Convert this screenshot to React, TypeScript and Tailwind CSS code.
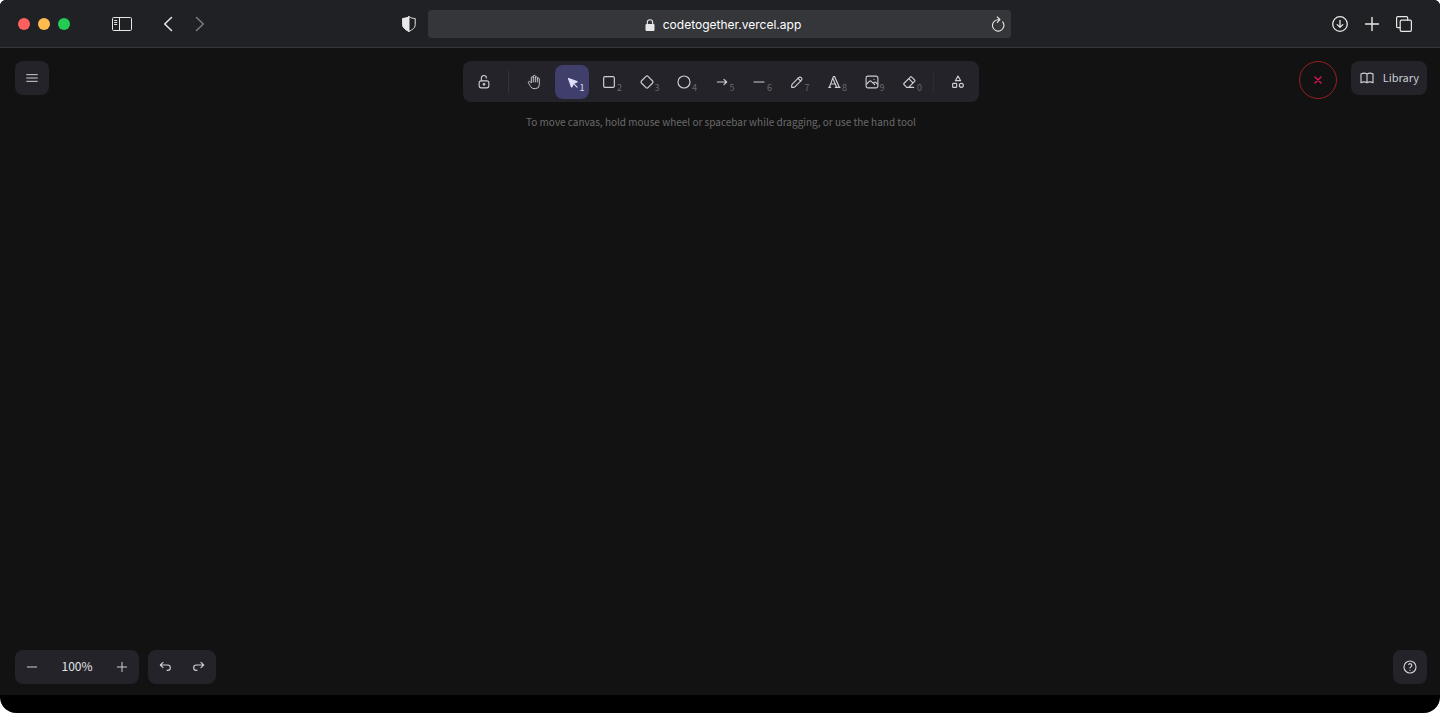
import { useState, type ReactNode } from "react";

type IconProps = { children: ReactNode; box?: number; stroke?: number; className?: string };

function Icon({ children, box = 24, stroke = 1.75, className = "size-4" }: IconProps) {
  return (
    <svg
      viewBox={`0 0 ${box} ${box}`}
      className={className}
      fill="none"
      stroke="currentColor"
      strokeWidth={stroke}
      strokeLinecap="round"
      strokeLinejoin="round"
      aria-hidden="true"
    >
      {children}
    </svg>
  );
}

type Tool = { label: string; shortcut?: string; icon: ReactNode };

const tools: Tool[] = [
  {
    label: "Hand",
    icon: (
      <Icon stroke={1.4}>
        <path d="M8 13v-7.5a1.5 1.5 0 0 1 3 0v6.5M11 5.5v-2a1.5 1.5 0 1 1 3 0v8.5M14 5.5a1.5 1.5 0 0 1 3 0v6.5" />
        <path d="M17 7.5a1.5 1.5 0 0 1 3 0v8.5a6 6 0 0 1-6 6h-2h.208a6 6 0 0 1-5.012-2.7l-.196-.3c-.312-.479-1.407-2.388-3.286-5.728a1.5 1.5 0 0 1 .536-2.022a1.867 1.867 0 0 1 2.28.28l1.47 1.47" />
      </Icon>
    ),
  },
  {
    label: "Selection",
    shortcut: "1",
    icon: (
      <Icon box={22} stroke={1.4}>
        <path
          fill="currentColor"
          d="M6 6l4.153 11.793a.365.365 0 0 0 .331.207a.366.366 0 0 0 .332-.207l2.184-4.793l4.787-1.994a.355.355 0 0 0 .213-.323a.355.355 0 0 0-.213-.323l-11.787-4.36z"
        />
        <path d="M13.5 13.5l4.5 4.5" />
      </Icon>
    ),
  },
  {
    label: "Rectangle",
    shortcut: "2",
    icon: (
      <Icon>
        <rect x="4" y="4" width="16" height="16" rx="2" />
      </Icon>
    ),
  },
  {
    label: "Diamond",
    shortcut: "3",
    icon: (
      <Icon>
        <path d="M10.5 20.4l-6.9-6.9c-.781-.781-.781-2.219 0-3l6.9-6.9c.781-.781 2.219-.781 3 0l6.9 6.9c.781.781.781 2.219 0 3l-6.9 6.9c-.781.781-2.219.781-3 0z" />
      </Icon>
    ),
  },
  {
    label: "Ellipse",
    shortcut: "4",
    icon: (
      <Icon>
        <circle cx="12" cy="12" r="9" />
      </Icon>
    ),
  },
  {
    label: "Arrow",
    shortcut: "5",
    icon: (
      <Icon>
        <path d="M5 12h14M15 16l4-4M15 8l4 4" />
      </Icon>
    ),
  },
  {
    label: "Line",
    shortcut: "6",
    icon: (
      <Icon>
        <path d="M4.5 12h15" />
      </Icon>
    ),
  },
  {
    label: "Draw",
    shortcut: "7",
    icon: (
      <Icon box={20} stroke={1.4}>
        <path d="m7.643 15.69 7.774-7.773a2.357 2.357 0 1 0-3.334-3.334L4.31 12.357a3.333 3.333 0 0 0-.977 2.357v1.953h1.953c.884 0 1.732-.352 2.357-.977Z" />
        <path d="m11.25 5.417 3.333 3.333" />
      </Icon>
    ),
  },
  {
    label: "Text",
    shortcut: "8",
    icon: (
      <Icon>
        <path d="M4 20h3M14 20h7M6.9 15h6.9M10.2 6.3L16 20M5 20L11 4h2l7 16" />
      </Icon>
    ),
  },
  {
    label: "Insert image",
    shortcut: "9",
    icon: (
      <Icon box={20} stroke={1.4}>
        <path d="M12.5 6.667h.01" />
        <path d="M4.91 2.625h10.18a2.284 2.284 0 0 1 2.285 2.284v10.182a2.284 2.284 0 0 1-2.284 2.284H4.909a2.284 2.284 0 0 1-2.284-2.284V4.909a2.284 2.284 0 0 1 2.284-2.284Z" />
        <path d="m3.333 12.5 3.334-3.333c.773-.745 1.726-.745 2.5 0l4.166 4.166M11.667 11.667l.833-.834c.774-.744 1.726-.744 2.5 0l1.667 1.667" />
      </Icon>
    ),
  },
  {
    label: "Eraser",
    shortcut: "0",
    icon: (
      <Icon>
        <path d="M19 20h-10.5l-4.21-4.3a1 1 0 0 1 0-1.41l10-10a1 1 0 0 1 1.41 0l5 5a1 1 0 0 1 0 1.41l-9.2 9.3M18 13.3l-6.3-6.3" />
      </Icon>
    ),
  },
];

const square = "flex size-[34px] shrink-0 items-center justify-center rounded-lg";

function BrowserBar() {
  return (
    <header className="grid h-12 shrink-0 grid-cols-[1fr_minmax(0,583px)_1fr] items-center border-b border-[#35363a] bg-[#202124] pr-0.5 text-[#e8e8e8]">
      <div className="flex items-center justify-between pr-3 pl-[18px]">
        <div className="flex items-center">
          <div className="flex gap-2">
            <button aria-label="Close window" className="size-3 rounded-full bg-[#ff5f5d]" />
            <button aria-label="Minimize window" className="size-3 rounded-full bg-[#ffbb4e]" />
            <button aria-label="Maximize window" className="size-3 rounded-full bg-[#23cb55]" />
          </div>
          <button aria-label="Show sidebar" className="ml-[42px]">
            <svg viewBox="0 0 20 14" className="h-[14px] w-5" fill="none" stroke="currentColor" aria-hidden="true">
              <rect x=".5" y=".5" width="19" height="13" rx="1.2" />
              <path d="M7.5 .5v13M2.2 3.5h3M2.2 5.5h3M2.2 7.5h3" />
            </svg>
          </button>
          <button aria-label="Back" className="ml-[31px]">
            <svg viewBox="0 0 10 16" className="h-4 w-[10px]" fill="none" stroke="currentColor" strokeWidth="1.5" strokeLinecap="round" strokeLinejoin="round" aria-hidden="true">
              <path d="M8.5 1.5L1.7 8l6.8 6.5" />
            </svg>
          </button>
          <button aria-label="Forward" className="ml-[22px] text-[#7b7c7e]">
            <svg viewBox="0 0 10 16" className="h-4 w-[10px]" fill="none" stroke="currentColor" strokeWidth="1.5" strokeLinecap="round" strokeLinejoin="round" aria-hidden="true">
              <path d="M1.5 1.5L8.3 8l-6.8 6.5" />
            </svg>
          </button>
        </div>
        <button aria-label="Privacy report">
          <svg viewBox="0 0 14 16" className="h-4 w-[14px]" fill="none" stroke="currentColor" strokeLinejoin="round" aria-hidden="true">
            <path d="M7 .6C5.4 1.9 3.2 2.4 .8 2.5v6.3c0 3 2.7 4.9 6.2 6.6c3.5-1.7 6.2-3.6 6.2-6.6V2.5C10.8 2.4 8.6 1.9 7 .6z" />
            <path fill="currentColor" d="M7 .6C5.4 1.9 3.2 2.4 .8 2.5v6.3c0 3 2.7 4.9 6.2 6.6z" />
          </svg>
        </button>
      </div>

      <div className="flex h-7 items-center rounded bg-[#35363a] pr-1.5 pl-7">
        <div className="flex min-w-0 flex-1 items-center justify-center gap-2 pt-0.5">
          <svg viewBox="0 0 10 12" className="h-3 w-[10px] shrink-0" aria-hidden="true">
            <rect x=".5" y="5" width="9" height="7" rx="1" fill="currentColor" />
            <path d="M2.3 5.5V3.4a2.7 2.7 0 0 1 5.4 0v2.1" fill="none" stroke="currentColor" strokeWidth="1.1" />
          </svg>
          <span className="font-['Inter',sans-serif] text-xs leading-4 text-white">codetogether.vercel.app</span>
        </div>
        <button aria-label="Reload">
          <svg viewBox="0 0 14 16" className="h-4 w-[14px]" fill="none" stroke="currentColor" strokeWidth="1.1" strokeLinecap="round" strokeLinejoin="round" aria-hidden="true">
            <path d="M11.7 5.9A5.7 5.7 0 1 1 7 3.7h1.8M6.3 1l2.7 2.7L6.3 6.4" />
          </svg>
        </button>
      </div>

      <div className="flex items-center justify-end gap-4 pr-[26px]">
        <button aria-label="Downloads">
          <Icon box={16} stroke={1.3}>
            <circle cx="8" cy="8" r="7.3" />
            <path d="M8 4.3v7M5.2 8.6L8 11.4l2.8-2.8" />
          </Icon>
        </button>
        <button aria-label="New tab">
          <Icon box={16} stroke={1.4}>
            <path d="M8 1.5v13M1.5 8h13" />
          </Icon>
        </button>
        <button aria-label="Show tabs">
          <Icon box={16} stroke={1.2}>
            <rect x="4.2" y="4.2" width="11.2" height="11.2" rx="1.3" />
            <path d="M4.2 11.7H1.9A1.3 1.3 0 0 1 .6 10.4V1.9A1.3 1.3 0 0 1 1.9 .6h8.5a1.3 1.3 0 0 1 1.3 1.3v2.3" />
          </Icon>
        </button>
      </div>
    </header>
  );
}

function Toolbar() {
  const [active, setActive] = useState("Selection");
  return (
    <div className="flex h-[41px] w-[516px] items-center rounded-lg bg-[#232329] px-1">
      <button aria-label="Keep selected tool active" className={square}>
        <Icon box={20} stroke={1.4}>
          <path d="M13.542 8.542H6.458a2.5 2.5 0 0 0-2.5 2.5v3.75a2.5 2.5 0 0 0 2.5 2.5h7.084a2.5 2.5 0 0 0 2.5-2.5v-3.75a2.5 2.5 0 0 0-2.5-2.5Z" />
          <path d="M10 13.958a1.042 1.042 0 1 0 0-2.083a1.042 1.042 0 0 0 0 2.083Z" />
          <path d="M6.7 8.4V5a3.1 3.1 0 0 1 3.1-3.1c1.9 0 3.2 1.2 3.2 3" />
        </Icon>
      </button>
      <span className="mr-2 ml-[7px] h-[22px] w-px bg-[#34343c]" />
      <div className="flex flex-1 justify-between">
        {tools.map(({ label, shortcut, icon }) => (
          <button
            key={label}
            aria-label={label}
            aria-pressed={active === label}
            onClick={() => setActive(label)}
            className={`${square} relative ${active === label ? "bg-[#403e6a] text-[#e0dfff]" : ""}`}
          >
            {icon}
            {shortcut && (
              <span
                className={`absolute right-1 bottom-1 text-[9px] leading-[14px] ${active === label ? "text-[#e0dfff]" : "text-[#68686f]"}`}
              >
                {shortcut}
              </span>
            )}
          </button>
        ))}
      </div>
      <span className="mx-[7px] h-[22px] w-px bg-[#2c2c33]" />
      <button aria-label="More tools" className={square}>
        <Icon>
          <path d="M12 3l-4 7h8z" />
          <circle cx="17" cy="17" r="3" />
          <rect x="4" y="14" width="6" height="6" rx="1" />
        </Icon>
      </button>
    </div>
  );
}

export default function App() {
  const [zoom, setZoom] = useState(100);
  return (
    <div className="flex min-h-screen flex-col bg-white pb-2 font-['Noto_Sans_CJK_SC',sans-serif]">
      <div className="flex flex-1 flex-col overflow-hidden rounded-t-md rounded-b-2xl bg-black pb-[18px]">
        <BrowserBar />
        <main className="flex flex-1 flex-col justify-between bg-[#121212] pt-[13px] pr-[13px] pb-[11px] pl-[15px] text-[#ceced4]">
          <div className="grid grid-cols-[1fr_auto_1fr] items-start">
            <button aria-label="Main menu" className={`${square} bg-[#232329]`}>
              <Icon stroke={1.5}>
                <path d="M4 7h16M4 12h16M4 17h16" />
              </Icon>
            </button>
            <div className="flex flex-col items-center gap-3">
              <Toolbar />
              <p className="text-[10px] leading-4 text-[#6a6a6a]">
                To move canvas, hold mouse wheel or spacebar while dragging, or use the hand tool
              </p>
            </div>
            <div className="flex items-start justify-end gap-[14px]">
              <button
                aria-label="Leave room"
                className="flex size-[38px] items-center justify-center rounded-full border border-[#991f1f] text-[#e0125c]"
              >
                <Icon box={8} stroke={1.4} className="size-2">
                  <path d="M1 1l6 6M7 1L1 7" />
                </Icon>
              </button>
              <button className="flex h-[34px] items-center gap-2 rounded-lg bg-[#232329] px-2 text-[11px] leading-4">
                <Icon>
                  <path d="M3 19a9 9 0 0 1 9 0a9 9 0 0 1 9 0M3 6a9 9 0 0 1 9 0a9 9 0 0 1 9 0M3 6v13M12 6v13M21 6v13" />
                </Icon>
                <span className="pb-0.5">Library</span>
              </button>
            </div>
          </div>

          <div className="flex items-center gap-[9px]">
            <div className="flex h-[34px] w-[124px] items-center justify-between rounded-lg bg-[#232329]">
              <button aria-label="Zoom out" className={square} onClick={() => setZoom(Math.max(10, zoom - 10))}>
                <Icon box={20} stroke={1.25}>
                  <path d="M4.167 10h11.666" />
                </Icon>
              </button>
              <button aria-label="Reset zoom" className="pb-0.5 text-xs leading-4 text-[#e3e3e8]" onClick={() => setZoom(100)}>
                {zoom}%
              </button>
              <button aria-label="Zoom in" className={square} onClick={() => setZoom(zoom + 10)}>
                <Icon box={20} stroke={1.25}>
                  <path d="M4.167 10h11.666M10 4.167v11.666" />
                </Icon>
              </button>
            </div>
            <div className="flex rounded-lg bg-[#232329]">
              <button aria-label="Undo" className={square}>
                <Icon box={20} stroke={1.4}>
                  <path d="M7.5 10.833L4.167 7.5L7.5 4.167M4.167 7.5h9.166a3.333 3.333 0 0 1 0 6.667H12.5" />
                </Icon>
              </button>
              <button aria-label="Redo" className={square}>
                <Icon box={20} stroke={1.4}>
                  <path d="M12.5 10.833L15.833 7.5L12.5 4.167M15.833 7.5H6.667a3.333 3.333 0 1 0 0 6.667H7.5" />
                </Icon>
              </button>
            </div>
            <button aria-label="Help" className={`${square} ml-auto bg-[#232329]`}>
              <Icon>
                <circle cx="12" cy="12" r="9" />
                <path d="M12 17v.01M12 13.5a1.5 1.5 0 0 1 1-1.5a2.6 2.6 0 1 0-3-4" />
              </Icon>
            </button>
          </div>
        </main>
      </div>
    </div>
  );
}
